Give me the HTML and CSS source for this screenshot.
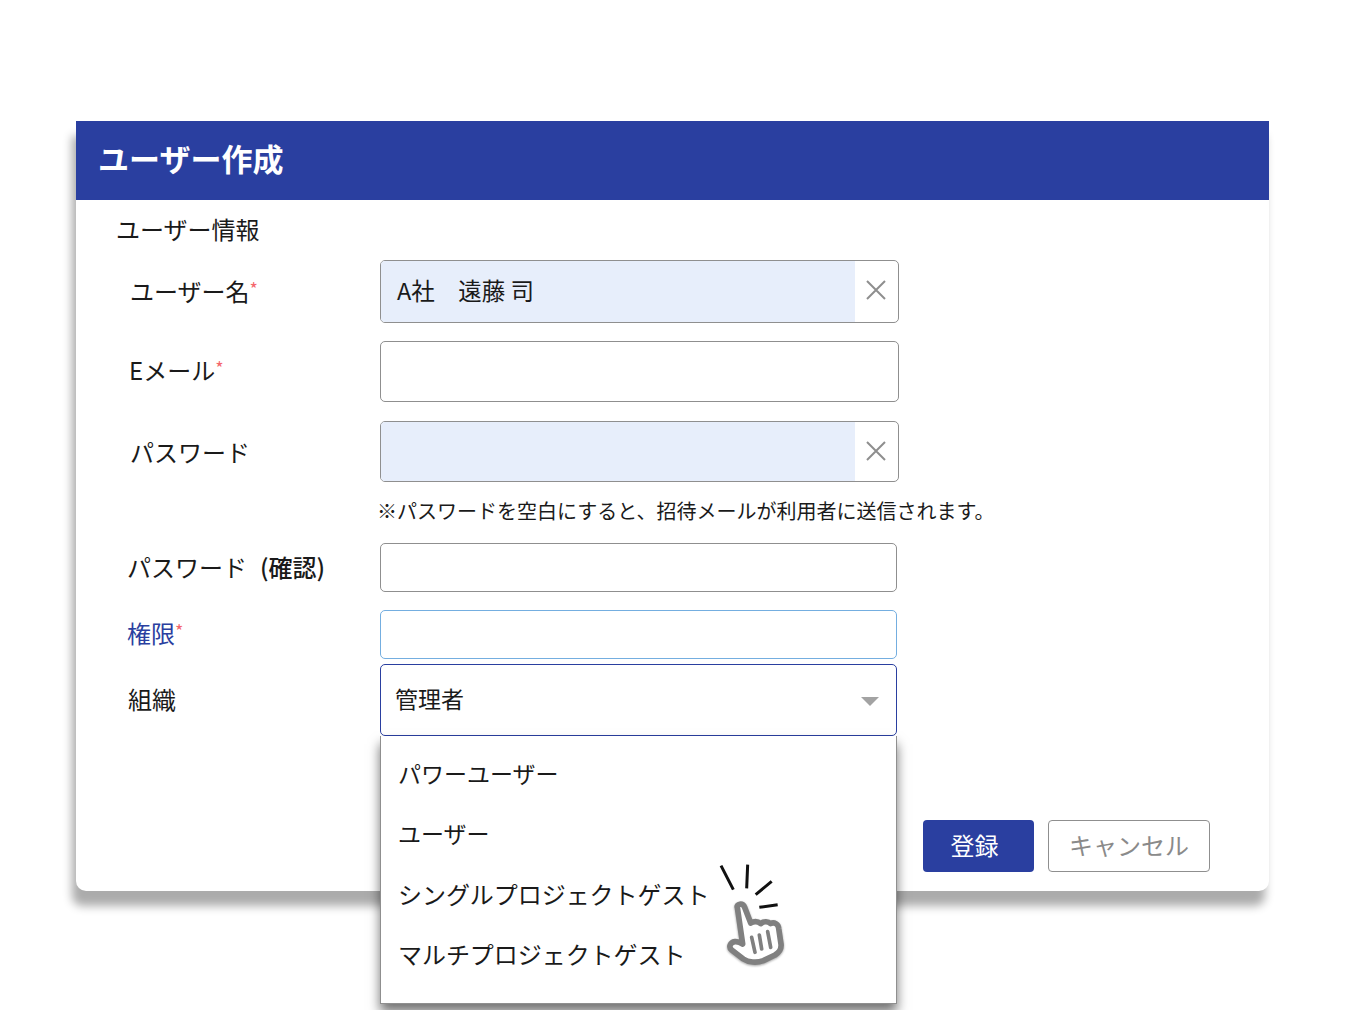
FILE: index.html
```html
<!DOCTYPE html>
<html lang="ja">
<head>
<meta charset="utf-8">
<title>ユーザー作成</title>
<link rel="stylesheet" href="styles.css">
</head>
<body>
<div class="stage">
  <div class="card">
    <div class="card-head">ユーザー作成</div>
    <div class="card-body">
      <div class="section-title">ユーザー情報</div>

      <div class="row row-first">
        <div class="label label-a">ユーザー名<span class="req">*</span></div>
        <div class="field field-wide filled">
          <div class="value">A社　遠藤 司</div>
          <div class="clear">
            <svg width="20" height="20" viewBox="0 0 20 20"><path d="M1 1L19 19M19 1L1 19" class="clear-x"/></svg>
          </div>
        </div>
      </div>

      <div class="row row-mail">
        <div class="label label-b">Eメール<span class="req">*</span></div>
        <div class="field field-wide"></div>
      </div>

      <div class="row row-pass">
        <div class="label label-a">パスワード</div>
        <div class="field field-wide filled">
          <div class="value"></div>
          <div class="clear">
            <svg width="20" height="20" viewBox="0 0 20 20"><path d="M1 1L19 19M19 1L1 19" class="clear-x"/></svg>
          </div>
        </div>
      </div>

      <div class="note">※パスワードを空白にすると、招待メールが利用者に送信されます。</div>

      <div class="row row-confirm">
        <div class="label label-c">パスワード<span class="paren">(確認)</span></div>
        <div class="field field-small"></div>
      </div>

      <div class="row row-role">
        <div class="label label-c label-blue">権限<span class="req">*</span></div>
        <div class="field field-small field-focus"></div>
      </div>

      <div class="row row-org">
        <div class="label label-c">組織</div>
        <div class="select-wrap">
          <div class="select">
            <span>管理者</span>
            <span class="arrow"></span>
          </div>
          <div class="menu">
            <div class="menu-item menu-item-small">パワーユーザー</div>
            <div class="menu-item menu-item-small">ユーザー</div>
            <div class="menu-item">シングルプロジェクトゲスト</div>
            <div class="menu-item">マルチプロジェクトゲスト</div>
            <svg class="hand" width="120" height="130" viewBox="0 0 360 390">
              <path class="spark" d="M63 50L100 122M143 47L140 118M215 97L167 137M178 175L233 167"/>
              <path class="hand-line" d="M112 175C108 165 128 160 134 175L152 222C165 215 175 218 182 224C192 216 205 218 212 224C222 218 235 225 236 238L243 285C245 300 238 310 225 318L190 335C170 342 145 340 130 330L95 303C85 295 90 280 105 278C115 277 120 280 128 285Z"/>
              <path class="hand-finger" d="M155 265L165 310M178 258L185 300M203 248L212 295"/>
            </svg>
          </div>
        </div>
      </div>

      <div class="buttons">
        <div class="btn btn-main">登録</div>
        <div class="btn btn-sub">キャンセル</div>
      </div>
    </div>
  </div>
</div>
</body>
</html>
```

FILE: styles.css
```css
html, body {
  margin: 0;
  background: #ffffff;
}
body {
  font-family: "Noto Sans CJK JP", "Noto Sans", sans-serif;
  color: #1a1a1a;
}
.stage {
  height: 1010px;
  overflow: hidden;
  padding: 121px 0 0 76px;
  box-sizing: border-box;
}

/* カード本体 */
.card {
  width: 1193px;
  height: 770px;
  background: #ffffff;
  border-radius: 0 0 10px 10px;
  box-shadow: -4px 15px 10px rgba(0, 0, 0, 0.33);
}
.card-head {
  height: 79px;
  background: #2a3fa0;
  color: #ffffff;
  font-size: 31px;
  font-weight: 700;
  line-height: 73px;
  padding-left: 22px;
}
.card-body {
  padding: 0 0 0 41px;
}
.section-title {
  font-size: 24px;
  line-height: 34px;
  padding-top: 12px;
  margin-left: -1px;
}

/* 入力行 */
.row {
  display: flex;
  align-items: center;
}
.row-first { margin-top: 14px; }
.row-mail { margin-top: 18px; }
.row-pass { margin-top: 19px; }
.row-confirm { margin-top: 0; }
.row-role { margin-top: 18px; }
.row-org { margin-top: 5px; }

.label {
  width: 263px;
  font-size: 24px;
  line-height: 34px;
  white-space: nowrap;
  box-sizing: border-box;
  padding-bottom: 1px;
}
.label-a { padding-left: 13px; }
.label-b { padding-left: 12px; padding-bottom: 4px; }
.label-c { padding-left: 10px; }
.label-blue { padding-bottom: 4px; color: #2a3fa0; }
.row-pass .label { padding-bottom: 0; padding-top: 1px; }
.row-org .label { padding-left: 11px; padding-bottom: 3px; }
.paren {
  font-weight: 500;
  margin-left: 13px;
}
.req {
  color: #f4666c;
  font-size: 18px;
  vertical-align: 5px;
  line-height: 0;
}

.field {
  display: flex;
  background: #ffffff;
  border: 1px solid #8f8f8f;
  border-radius: 5px;
  box-sizing: border-box;
  overflow: hidden;
}
.field-wide {
  width: 519px;
  height: 61px;
}
.row-first .field-wide { height: 63px; }
.field-small {
  width: 517px;
  height: 49px;
}
.field-focus { border-color: #74aee0; }
.filled .value {
  flex: 1;
  background: #e7eefb;
  font-size: 23.5px;
  line-height: 58px;
  padding-left: 16px;
  white-space: pre;
}
.clear {
  width: 42px;
  padding-right: 1px;
  display: flex;
  align-items: center;
  justify-content: center;
}
.clear svg { margin-top: -3px; }
.row-pass .clear svg { margin-top: -1px; }
.clear-x {
  stroke: #8e8e8e;
  stroke-width: 2;
  fill: none;
}

.note {
  font-size: 20px;
  line-height: 28px;
  margin: 15px 0 0 260px;
  height: 46px;
}

/* 権限セレクト */
.select-wrap {
  position: relative;
  width: 517px;
}
.select {
  height: 72px;
  border: 1px solid #2a3fa0;
  border-radius: 5px;
  box-sizing: border-box;
  font-size: 23px;
  padding: 0 17px 5px 14px;
  display: flex;
  align-items: center;
  justify-content: space-between;
  background: #ffffff;
}
.arrow {
  width: 0;
  height: 0;
  border-left: 9px solid transparent;
  border-right: 9px solid transparent;
  border-top: 9px solid #a3a3a3;
  margin-top: 7px;
}
.menu {
  position: absolute;
  top: 72px;
  left: 0;
  width: 517px;
  height: 268px;
  background: #ffffff;
  border: 1px solid #8f8f8f;
  border-top: 0;
  box-sizing: border-box;
  box-shadow: 0 8px 11px rgba(0, 0, 0, 0.55);
  padding-top: 9px;
  z-index: 2;
}
.menu-item {
  height: 60.4px;
  line-height: 56px;
  font-size: 24px;
  padding-left: 17px;
  letter-spacing: -0.05px;
}
.menu-item-small {
  font-size: 23px;
  letter-spacing: 0;
}
.hand {
  position: absolute;
  left: 319px;
  top: 113px;
  overflow: visible;
}
.spark {
  stroke: #111111;
  stroke-width: 9;
  fill: none;
}
.hand-line {
  fill: #ffffff;
  stroke: #808080;
  stroke-width: 17;
  stroke-linejoin: round;
  filter: drop-shadow(0 3px 3px rgba(0, 0, 0, 0.35));
}
.hand-finger {
  stroke: #808080;
  stroke-width: 11;
  stroke-linecap: round;
  fill: none;
}

/* ボタン */
.buttons {
  display: flex;
  gap: 14px;
  margin: 84px 0 0 806px;
}
.btn {
  height: 52px;
  line-height: 50px;
  font-size: 24px;
  text-align: center;
  border-radius: 4px;
  box-sizing: border-box;
}
.btn-main {
  width: 111px;
  background: #2a3fa0;
  color: #ffffff;
  padding-right: 8px;
}
.btn-sub {
  width: 162px;
  border: 1px solid #8f8f8f;
  color: #8a8a8a;
  line-height: 48px;
}
```
